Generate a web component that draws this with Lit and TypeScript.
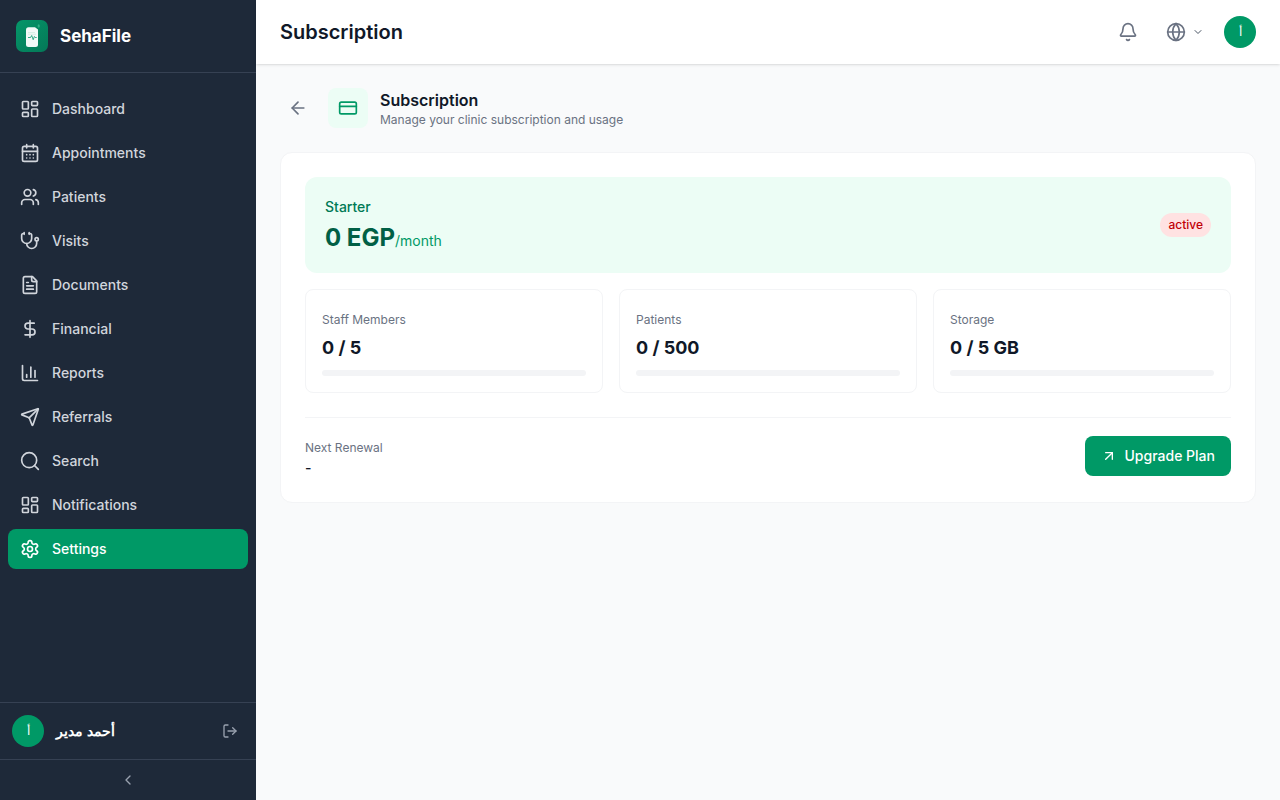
import { LitElement, html, css, svg, unsafeCSS } from "lit";
import { customElement, property, state } from "lit/decorators.js";
import { classMap } from "lit/directives/class-map.js";
import { styleMap } from "lit/directives/style-map.js";

const FONT = unsafeCSS(`Inter, sans-serif`);

const shapes: Record<string, unknown> = {
  dashboard: svg`<rect width="7" height="9" x="3" y="3" rx="1"/><rect width="7" height="5" x="14" y="3" rx="1"/><rect width="7" height="9" x="14" y="12" rx="1"/><rect width="7" height="5" x="3" y="16" rx="1"/>`,
  calendar: svg`<path d="M8 2v4M16 2v4"/><rect width="18" height="18" x="3" y="4" rx="2"/><path d="M3 10h18M8 14h.01M12 14h.01M16 14h.01M8 18h.01M12 18h.01M16 18h.01"/>`,
  users: svg`<path d="M16 21v-2a4 4 0 0 0-4-4H6a4 4 0 0 0-4 4v2"/><path d="M16 3.128a4 4 0 0 1 0 7.744"/><path d="M22 21v-2a4 4 0 0 0-3-3.87"/><circle cx="9" cy="7" r="4"/>`,
  stethoscope: svg`<path d="M11 2v2"/><path d="M5 2v2"/><path d="M5 3H4a2 2 0 0 0-2 2v4a6 6 0 0 0 12 0V5a2 2 0 0 0-2-2h-1"/><path d="M8 15a6 6 0 0 0 12 0v-3"/><circle cx="20" cy="10" r="2"/>`,
  file: svg`<path d="M15 2H6a2 2 0 0 0-2 2v16a2 2 0 0 0 2 2h12a2 2 0 0 0 2-2V7Z"/><path d="M14 2v4a2 2 0 0 0 2 2h4"/><path d="M10 9H8"/><path d="M16 13H8"/><path d="M16 17H8"/>`,
  dollar: svg`<path d="M12 2v20"/><path d="M17 5H9.5a3.5 3.5 0 0 0 0 7h5a3.5 3.5 0 0 1 0 7H6"/>`,
  chart: svg`<path d="M3 3v16a2 2 0 0 0 2 2h16"/><path d="M18 17V9"/><path d="M13 17V5"/><path d="M8 17v-3"/>`,
  send: svg`<path d="M14.536 21.686a.5.5 0 0 0 .937-.024l6.5-19a.496.496 0 0 0-.635-.635l-19 6.5a.5.5 0 0 0-.024.937l7.93 3.18a2 2 0 0 1 1.112 1.11z"/><path d="m21.854 2.147-10.94 10.939"/>`,
  search: svg`<circle cx="11" cy="11" r="9"/><path d="m22 22-4.6-4.6"/>`,
  settings: svg`<path d="M12.22 2h-.44a2 2 0 0 0-2 2v.18a2 2 0 0 1-1 1.73l-.43.25a2 2 0 0 1-2 0l-.15-.08a2 2 0 0 0-2.73.73l-.22.38a2 2 0 0 0 .73 2.73l.15.1a2 2 0 0 1 1 1.72v.51a2 2 0 0 1-1 1.74l-.15.09a2 2 0 0 0-.73 2.73l.22.38a2 2 0 0 0 2.73.73l.15-.08a2 2 0 0 1 2 0l.43.25a2 2 0 0 1 1 1.73V20a2 2 0 0 0 2 2h.44a2 2 0 0 0 2-2v-.18a2 2 0 0 1 1-1.73l.43-.25a2 2 0 0 1 2 0l.15.08a2 2 0 0 0 2.73-.73l.22-.39a2 2 0 0 0-.73-2.73l-.15-.08a2 2 0 0 1-1-1.74v-.5a2 2 0 0 1 1-1.74l.15-.09a2 2 0 0 0 .73-2.73l-.22-.38a2 2 0 0 0-2.73-.73l-.15.08a2 2 0 0 1-2 0l-.43-.25a2 2 0 0 1-1-1.73V4a2 2 0 0 0-2-2z"/><circle cx="12" cy="12" r="3"/>`,
  logout: svg`<path d="M9 21H5a2 2 0 0 1-2-2V5a2 2 0 0 1 2-2h4"/><path d="m16 17 5-5-5-5"/><path d="M21 12H9"/>`,
  chevronLeft: svg`<path d="m15 18-6-6 6-6"/>`,
  chevronDown: svg`<path d="m6 9 6 6 6-6"/>`,
  bell: svg`<path d="M10.268 21a2 2 0 0 0 3.464 0"/><path d="M3.262 15.326A1 1 0 0 0 4 17h16a1 1 0 0 0 .74-1.673C19.41 13.956 18 12.499 18 8A6 6 0 0 0 6 8c0 4.499-1.411 5.956-2.738 7.326"/>`,
  globe: svg`<circle cx="12" cy="12" r="10"/><path d="M12 2a14.5 14.5 0 0 0 0 20 14.5 14.5 0 0 0 0-20"/><path d="M2 12h20"/>`,
  arrowLeft: svg`<path d="m12 19-7-7 7-7"/><path d="M19 12H5"/>`,
  card: svg`<rect width="20" height="14" x="2" y="5" rx="2"/><path d="M2 10h20"/>`,
  arrowUpRight: svg`<path d="M7 7h10v10"/><path d="M7 17 17 7"/>`,
};

const icon = (name: string, size = 20, stroke = 2) => html`<svg
  width=${size} height=${size} viewBox="0 0 24 24" fill="none" stroke="currentColor"
  stroke-width=${stroke} stroke-linecap="round" stroke-linejoin="round" aria-hidden="true"
>${shapes[name]}</svg>`;

const base = css`
  *, *::before, *::after { box-sizing: border-box; }
  h1, h2, p { margin: 0; font: inherit; }
  svg { display: block; flex: none; }
  a { color: inherit; text-decoration: none; }
  button { margin: 0; border: 0; padding: 0; background: none; color: inherit; font: inherit; cursor: pointer; }
  .avatar {
    display: flex; align-items: center; justify-content: center; flex: none;
    width: 32px; height: 32px; border-radius: 50%;
    background: #009966; color: #fff; font-size: 12px; line-height: 16px; font-weight: 500;
  }
`;

const NAV = [
  ["dashboard", "Dashboard"],
  ["calendar", "Appointments"],
  ["users", "Patients"],
  ["stethoscope", "Visits"],
  ["file", "Documents"],
  ["dollar", "Financial"],
  ["chart", "Reports"],
  ["send", "Referrals"],
  ["search", "Search"],
  ["dashboard", "Notifications"],
  ["settings", "Settings"],
];

@customElement("app-sidebar")
class AppSidebar extends LitElement {
  @state() private current = "Settings";

  static styles = [base, css`
    :host { display: flex; flex-direction: column; background: #1e2939; color: #d1d5dc; }
    .brand {
      display: flex; align-items: center; gap: 12px; padding: 20px 16px;
      border-bottom: 1px solid #364153;
      color: #fff; font-size: 17px; line-height: 32px; font-weight: 700;
    }
    nav { flex: 1; display: flex; flex-direction: column; gap: 4px; padding: 16px 8px; }
    .item {
      display: flex; align-items: center; gap: 12px; padding: 10px 12px; border-radius: 8px;
      font-size: 14px; line-height: 20px; font-weight: 500;
    }
    .item.active { background: #009966; color: #fff; }
    .user { display: flex; align-items: center; gap: 12px; padding: 12px; border-top: 1px solid #364153; }
    .name { flex: 1; color: #fff; font-size: 14px; line-height: 20px; font-weight: 600; }
    .logout { padding: 6px; color: #99a1af; }
    .collapse {
      display: flex; align-items: center; justify-content: center; padding: 12px;
      border-top: 1px solid #364153; color: #99a1af;
    }
  `];

  render() {
    return html`
      <div class="brand">
        <svg width="32" height="32" viewBox="0 0 32 32" aria-hidden="true">
          <defs>
            <linearGradient id="tile" x1="0" y1="0" x2="1" y2="1">
              <stop offset="0" stop-color="#059669" /><stop offset="1" stop-color="#047857" />
            </linearGradient>
          </defs>
          <rect width="32" height="32" rx="7" fill="url(#tile)" />
          <path d="M12.5 7.3h6.5l3 2.2v15a2.5 2.5 0 0 1-2.5 2.5h-7a2.5 2.5 0 0 1-2.5-2.5V9.800a2.500 2.500 0 0 1 2.500-2.500z" fill="#fff" fill-opacity=".95" />
          <path d="M12 12.500h7M12 14.200h8" stroke="#c3e8da" stroke-width=".6" />
          <path d="M12 17.500h2.500l1.200-2 1.500 4.200 1.200-3.200.8 1h1.500" fill="none" stroke="#059669" stroke-width=".8" stroke-linejoin="round" />
          <ellipse cx="22.700" cy="6" rx="1.100" ry="1.800" fill="#6ee7b7" fill-opacity=".4" />
        </svg>
        <span>SehaFile</span>
      </div>
      <nav>
        ${NAV.map(([glyph, label]) => html`
          <a href="#" class=${classMap({ item: true, active: label === this.current })}
            @click=${(e: Event) => { e.preventDefault(); this.current = label; }}
          >${icon(glyph)}<span>${label}</span></a>`)}
      </nav>
      <div class="user">
        <span class="avatar">أ</span>
        <span class="name">أحمد مدير</span>
        <button class="logout" aria-label="Log out">${icon("logout", 16)}</button>
      </div>
      <button class="collapse" aria-label="Collapse sidebar">${icon("chevronLeft", 16)}</button>
    `;
  }
}

@customElement("app-topbar")
class AppTopbar extends LitElement {
  static styles = [base, css`
    :host {
      display: flex; align-items: center; justify-content: space-between;
      min-height: 64px; padding: 0 24px; background: #fff;
      box-shadow: 0 1px 3px rgb(0 0 0 / 10%), 0 1px 2px -1px rgb(0 0 0 / 10%);
    }
    .title { color: #101828; font-size: 20px; line-height: 28px; font-weight: 600; }
    .tools { display: flex; align-items: center; gap: 12px; color: #6a7282; }
    .tool { display: flex; align-items: center; gap: 6px; padding: 8px; }
    .caret { color: #4a5565; }
  `];

  render() {
    return html`
      <h1 class="title">Subscription</h1>
      <div class="tools">
        <button class="tool" aria-label="Notifications">${icon("bell")}</button>
        <button class="tool" aria-label="Language">${icon("globe")}<span class="caret">${icon("chevronDown", 12)}</span></button>
        <button class="avatar" aria-label="Account">أ</button>
      </div>
    `;
  }
}

@customElement("usage-card")
class UsageCard extends LitElement {
  @property() label = "";
  @property({ type: Number }) used = 0;
  @property({ type: Number }) limit = 1;
  @property() unit = "";

  static styles = [base, css`
    :host { display: block; padding: 16px; border: 1px solid #f3f4f6; border-radius: 8px; }
    .label { margin-bottom: 4px; line-height: 24px; }
    .label span { color: #6a7282; font-size: 12px; line-height: 16px; }
    .value { margin-bottom: 8px; color: #101828; font-size: 18px; line-height: 28px; font-weight: 700; }
    .track { height: 6px; border-radius: 3px; background: #f3f4f6; overflow: hidden; }
    .fill { height: 100%; border-radius: 3px; background: #009966; }
  `];

  render() {
    return html`
      <p class="label"><span>${this.label}</span></p>
      <p class="value">${this.used} / ${this.limit}${this.unit ? ` ${this.unit}` : ""}</p>
      <div class="track"><div class="fill" style=${styleMap({ width: `${(this.used / this.limit) * 100}%` })}></div></div>
    `;
  }
}

@customElement("app-root")
class AppRoot extends LitElement {
  static styles = [base, css`
    :host {
      display: grid; grid-template-columns: 256px minmax(0, 1fr); min-height: 100vh;
      background: #f9fafb; color: #101828;
      font-family: ${FONT}; font-size: 16px; line-height: 24px;
    }
    main { padding: 24px; }
    .heading { display: flex; align-items: center; gap: 12px; margin-bottom: 24px; }
    .back { padding: 8px; color: #6a7282; }
    .badge-icon { padding: 10px; border-radius: 8px; background: #ecfdf5; color: #009966; }
    .name { font-size: 16px; line-height: 24px; font-weight: 600; }
    .note { color: #6a7282; font-size: 12px; line-height: 16px; }
    .panel { padding: 24px; border: 1px solid #f3f4f6; border-radius: 12px; background: #fff; }
    .plan {
      display: flex; align-items: center; justify-content: space-between;
      padding: 20px; border-radius: 12px; background: #ecfdf5;
    }
    .plan-name { margin-bottom: 6px; color: #007a55; font-size: 14px; line-height: 20px; font-weight: 500; }
    .price { color: #006045; font-size: 24px; line-height: 30px; font-weight: 700; }
    .per { color: #009966; font-size: 14px; line-height: 20px; font-weight: 400; }
    .status {
      padding: 4px 8px; border-radius: 12px; background: #ffe2e2; color: #c10007;
      font-size: 12px; line-height: 16px; font-weight: 500;
    }
    .usage { display: grid; grid-template-columns: repeat(3, minmax(0, 1fr)); gap: 16px; margin: 16px 0 24px; }
    .footer {
      display: flex; align-items: center; justify-content: space-between;
      padding-top: 16px; border-top: 1px solid #f3f4f6;
    }
    .renewal-label { color: #6a7282; font-size: 12px; line-height: 16px; }
    .renewal { font-size: 14px; line-height: 20px; font-weight: 500; }
    .upgrade {
      display: flex; align-items: center; gap: 8px; padding: 10px 16px; border-radius: 8px;
      background: #009966; color: #fff; font-size: 14px; line-height: 20px; font-weight: 500;
    }
  `];

  render() {
    return html`
      <app-sidebar></app-sidebar>
      <div>
        <app-topbar></app-topbar>
        <main>
          <div class="heading">
            <button class="back" aria-label="Back">${icon("arrowLeft")}</button>
            <div class="badge-icon">${icon("card")}</div>
            <div>
              <h2 class="name">Subscription</h2>
              <p class="note">Manage your clinic subscription and usage</p>
            </div>
          </div>
          <section class="panel">
            <div class="plan">
              <div>
                <p class="plan-name">Starter</p>
                <p class="price">0 EGP<span class="per">/month</span></p>
              </div>
              <span class="status">active</span>
            </div>
            <div class="usage">
              <usage-card label="Staff Members" used="0" limit="5"></usage-card>
              <usage-card label="Patients" used="0" limit="500"></usage-card>
              <usage-card label="Storage" used="0" limit="5" unit="GB"></usage-card>
            </div>
            <div class="footer">
              <div>
                <p><span class="renewal-label">Next Renewal</span></p>
                <p class="renewal">-</p>
              </div>
              <button class="upgrade">${icon("arrowUpRight", 16)}<span>Upgrade Plan</span></button>
            </div>
          </section>
        </main>
      </div>
    `;
  }
}
